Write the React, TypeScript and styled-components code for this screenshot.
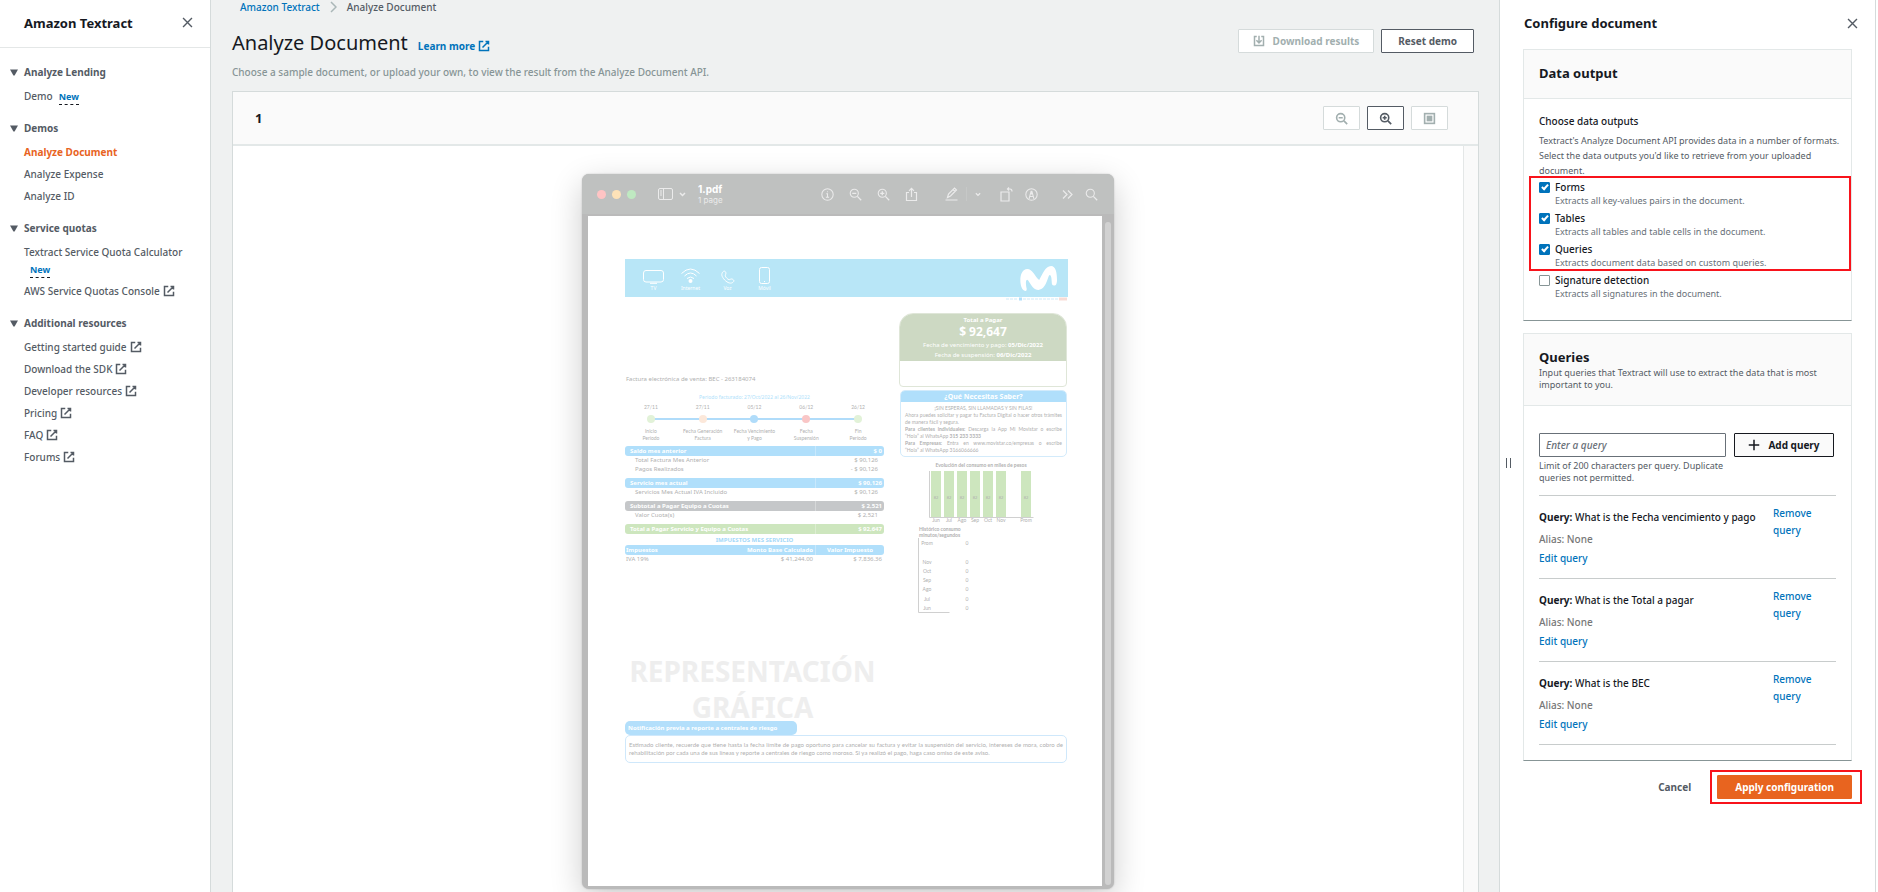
import React from "react";
import styled, { createGlobalStyle, css } from "styled-components";

const font = `"Noto Sans", "Open Sans", sans-serif`;
const c = {
  ink: "#16191f",
  text: "#545b64",
  muted: "#687078",
  soft: "#879596",
  disabled: "#a2afaf",
  line: "#d5dbdb",
  rule: "#e3e8e8",
  head: "#fafafa",
  link: "#0073bb",
  orange: "#e8641f",
  red: "#f8131b",
};

const GlobalStyle = createGlobalStyle`
  *, *::before, *::after { box-sizing: border-box; }
  body { margin: 0; background: #fff; font: 500 10px/16px ${font}; color: ${c.text}; }
  h1, h2, h3, p, ul { margin: 0; padding: 0; }
  ul { list-style: none; }
  button { font: inherit; color: inherit; background: none; border: 0; padding: 0; cursor: pointer; }
  a { text-decoration: none; color: inherit; }
  svg { display: block; flex: none; }
`;

/* ---------- shell ---------- */

const Shell = styled.div`
  display: grid;
  grid-template-columns: 211px minmax(0, 1fr) 377px;
  min-height: 100vh;
  padding-right: 2px;
`;

const Sidebar = styled.nav`
  border-right: 1px solid ${c.line};
`;

const SidebarHead = styled.div`
  display: flex;
  align-items: center;
  justify-content: space-between;
  height: 48px;
  padding: 0 16px 2px 24px;
  border-bottom: 1px solid #e4e7e7;
`;

const PanelTitle = styled.h2`
  font-size: 13px;
  line-height: 20px;
  font-weight: 700;
  color: ${c.ink};
`;

const IconButton = styled.button`
  display: flex;
  color: ${c.text};
`;

const Sections = styled.div`
  display: flex;
  flex-direction: column;
  gap: 10px;
  padding: 13px 10px 0;
`;

const SectionToggle = styled.button`
  display: flex;
  align-items: center;
  gap: 6px;
  height: 22px;
  margin-bottom: 2px;
  font-weight: 700;
`;

const SectionItem = styled.li`
  min-height: 22px;
  padding-left: 14px;
  white-space: nowrap;
`;

const NavLink = styled.a<{ $active?: boolean }>`
  display: inline-flex;
  align-items: center;
  gap: 3px;
  line-height: 22px;
  ${(p) =>
    p.$active &&
    css`
      font-weight: 700;
      color: ${c.orange};
    `}
`;

const Badge = styled.button<{ $below?: boolean }>`
  margin-left: 6px;
  font-size: 9px;
  line-height: 14px;
  font-weight: 700;
  color: ${c.link};
  border-bottom: 1px dashed ${c.ink};
  ${(p) =>
    p.$below &&
    css`
      display: block;
      margin-bottom: 2px;
    `}
`;

/* ---------- main ---------- */

const Main = styled.main`
  display: flex;
  flex-direction: column;
  padding: 0 20px 0 21px;
  background: #eff1f1;
`;

const Breadcrumbs = styled.nav`
  display: flex;
  align-items: center;
  gap: 10px;
  padding-left: 8px;
  height: 14px;
  color: ${c.text};
`;

const TextLink = styled.a`
  color: ${c.link};
`;

const TitleRow = styled.div`
  display: flex;
  justify-content: space-between;
  height: 50px;
  padding: 15px 5px 0 0;
`;

const TitleGroup = styled.div`
  display: flex;
  align-items: baseline;
  gap: 10px;
  height: 28px;
`;

const Title = styled.h1`
  font-size: 20px;
  line-height: 28px;
  font-weight: 400;
  color: ${c.ink};
`;

const LearnMore = styled.a`
  display: inline-flex;
  align-items: center;
  gap: 3px;
  font-weight: 700;
  color: ${c.link};
`;

const Actions = styled.div`
  display: flex;
  gap: 7px;
`;

type Tone = "normal" | "disabled" | "strong" | "primary" | "plain";
const tones: Record<Tone, string> = {
  normal: `background:#fff; color:${c.text}; border-color:${c.text};`,
  disabled: `background:#fff; color:${c.disabled}; border-color:${c.line};`,
  strong: `background:${c.head}; color:${c.ink}; border-color:${c.ink};`,
  primary: `background:${c.orange}; color:#fff; border-color:${c.orange};`,
  plain: `color:${c.text}; border-color:transparent;`,
};

const Button = styled.button<{ $tone: Tone; $pad?: number }>`
  display: inline-flex;
  align-items: center;
  justify-content: center;
  gap: 8px;
  height: 24px;
  padding: 0 ${(p) => p.$pad ?? 16}px;
  border: 1px solid;
  border-radius: 1px;
  font-weight: 700;
  white-space: nowrap;
  ${(p) => tones[p.$tone]}
`;

const Description = styled.p`
  height: 27px;
  color: ${c.soft};
`;

const Viewer = styled.section`
  display: flex;
  flex-direction: column;
  flex: 1;
  border: 1px solid ${c.line};
  border-bottom: 0;
  background: #fff;
`;

const ViewerHead = styled.header`
  display: flex;
  align-items: center;
  justify-content: space-between;
  height: 54px;
  padding: 0 30px 0 22px;
  background: ${c.head};
  border-bottom: 2px solid ${c.rule};
`;

const ViewerBody = styled.div`
  display: grid;
  grid-template-columns: minmax(0, 1fr) 15px;
  flex: 1;
`;

const Stage = styled.div`
  display: flex;
  justify-content: center;
  padding: 28px 0 3px;
  overflow: hidden;
`;

const Gutter = styled.div`
  background: ${c.head};
  border-left: 1px solid #e4e7e7;
`;

/* ---------- scanned window ---------- */

const DocWindow = styled.article`
  display: flex;
  flex-direction: column;
  width: 532px;
  height: 715px;
  border-radius: 7px;
  background: #bababa;
  box-shadow: 0 10px 32px rgba(0, 0, 0, 0.2), 0 0 2px rgba(0, 0, 0, 0.2);
  overflow: hidden;
`;

const TitleBar = styled.div`
  display: flex;
  align-items: center;
  height: 40px;
  padding: 0 16px 0 15px;
  background: #bfc1c0;
  color: #ebebeb;
`;

const Lights = styled.div`
  display: flex;
  gap: 6px;
  margin-right: 22px;
`;

const Light = styled.i<{ $color: string }>`
  width: 9px;
  height: 9px;
  border-radius: 50%;
  background: ${(p) => p.$color};
`;

const FileName = styled.div`
  margin: 0 auto 0 12px;
  font: 400 8px/10px Inter, sans-serif;
  strong {
    display: block;
    font-size: 10px;
    line-height: 12px;
    color: #fff;
  }
`;

const Tools = styled.div<{ $gap: number; $before?: number }>`
  display: flex;
  align-items: center;
  gap: ${(p) => p.$gap}px;
  margin-left: ${(p) => p.$before ?? 0}px;
`;

const Separator = styled.i`
  width: 1px;
  height: 14px;
  background: #c6c8c7;
`;

const PageRow = styled.div`
  display: grid;
  grid-template-columns: minmax(0, 1fr) 6px;
  gap: 3px;
  flex: 1;
  padding: 2px 3px 3px 6px;
`;

const Thumb = styled.div`
  margin: 6px 0 1px;
  border-radius: 3px;
  background: #d1d1d1;
`;

const Page = styled.div`
  padding: 43px 34px 0 37px;
  background: #fff;
  font-size: 6px;
  line-height: 9px;
  font-weight: 400;
  color: #b0b0b0;
`;

const Banner = styled.div`
  display: flex;
  align-items: center;
  justify-content: space-between;
  height: 38px;
  padding: 0 11px 0 10px;
  background: #b8e6f7;
  color: #fff;
`;

const Services = styled.div`
  display: flex;
`;

const Service = styled.div`
  display: flex;
  flex-direction: column;
  align-items: center;
  justify-content: flex-end;
  width: 37px;
  height: 28px;
  font-size: 5px;
  line-height: 7px;
  gap: 1px;
`;

const Columns = styled.div`
  display: grid;
  grid-template-columns: 259px 168px;
  gap: 15px;
  margin-top: 12px;
`;

const InvoiceNo = styled.p`
  padding: 61px 0 9px 1px;
  line-height: 10px;
`;

const Period = styled.p`
  text-align: center;
  font-size: 5px;
  line-height: 8px;
  color: #b0dffb;
`;

const Timeline = styled.ol`
  display: grid;
  grid-template-columns: repeat(5, 1fr);
  margin: 3px 0 0;
  padding: 0;
  list-style: none;
  text-align: center;
  font: 5px/7px Lato, sans-serif;
`;

const Step = styled.li`
  white-space: nowrap;
`;

const StepDot = styled.div<{ $color: string; $edge?: "first" | "last" }>`
  display: flex;
  justify-content: center;
  margin: 4px 0 5px;
  background: linear-gradient(#b0dcfa, #b0dcfa) no-repeat
    ${(p) => (p.$edge === "first" ? "right" : "left")} center /
    ${(p) => (p.$edge ? "50%" : "100%")} 2px;
  &::after {
    content: "";
    width: 8px;
    height: 8px;
    border-radius: 50%;
    background: ${(p) => p.$color};
  }
`;

const Charges = styled.table<{ $color: string }>`
  width: 100%;
  margin-top: 4px;
  border-spacing: 0;
  table-layout: fixed;
  th,
  td {
    padding: 0 6px 0 10px;
    font-weight: 400;
    text-align: left;
    line-height: 9px;
  }
  th:last-child,
  td:last-child {
    width: 69px;
    text-align: right;
  }
  thead th {
    padding: 0 2px 0 5px;
    font-weight: 700;
    line-height: 10px;
    color: #fff;
    background: ${(p) => p.$color};
  }
  thead th:first-child {
    border-radius: 3px 0 0 3px;
  }
  thead th:last-child {
    border-radius: 0 3px 3px 0;
    border-left: 1px solid rgba(255, 255, 255, 0.3);
  }
`;

const Taxes = styled(Charges)`
  margin-top: 0;
  caption {
    padding-top: 2px;
    font-weight: 700;
    line-height: 9px;
    color: #a5d9f9;
  }
  th,
  td,
  thead th {
    padding: 0 2px 0 1px;
  }
  th:nth-child(2),
  td:nth-child(2) {
    text-align: right;
  }
  thead th:last-child {
    padding-right: 11px;
  }
`;

const TotalCard = styled.div`
  height: 74px;
  border: 1px solid #dfe6d8;
  border-radius: 14px 14px 4px 4px;
  overflow: hidden;
`;

const TotalHead = styled.div`
  padding: 2px 0 1px;
  background: #cdd9c3;
  color: #fff;
  text-align: center;
  line-height: 10px;
`;

const TotalLabel = styled.h3`
  font-size: 6px;
  line-height: 8px;
`;

const Amount = styled.p`
  font-size: 12px;
  line-height: 16px;
  font-weight: 700;
`;

const InfoCard = styled.div`
  height: 67px;
  margin: 3px 0 4px 1px;
  border: 1px solid #d3ebfb;
  border-radius: 5px;
  overflow: hidden;
`;

const InfoLine = styled.p<{ $align?: "center" | "justify" }>`
  padding: 0 4px;
  font: 5px/7px Lato, sans-serif;
  white-space: nowrap;
  text-align-last: ${(p) => p.$align ?? "left"};
`;

const InfoTitle = styled.h3`
  margin-bottom: 3px;
  font-size: 7px;
  line-height: 11px;
  text-align: center;
  color: #fff;
  background: #b0dffb;
`;

const Watermark = styled.p`
  width: 255px;
  margin-top: 40px;
  font-size: 28px;
  line-height: 36px;
  font-weight: 700;
  text-align: center;
  color: #eee;
`;

const Notice = styled.h3`
  width: 172px;
  margin-top: -4px;
  padding-left: 3px;
  border-radius: 5px;
  font-size: 6px;
  line-height: 14px;
  background: #b3dffb;
  color: #fff;
`;

const NoticeBody = styled.div`
  width: 442px;
  padding: 5px 3px;
  border: 1px solid #cfe8fb;
  border-radius: 5px;
  font: 6px/8px Lato, sans-serif;
  white-space: nowrap;
`;

const FullLine = styled.p`
  text-align-last: justify;
`;

/* ---------- configuration panel ---------- */

const Aside = styled.aside`
  display: grid;
  grid-template-columns: 23px minmax(0, 1fr);
  padding-right: 23px;
  border-left: 1px solid ${c.line};
  border-right: 1px solid ${c.line};
`;

const Resizer = styled.button`
  display: flex;
  align-items: center;
  gap: 3px;
  padding: 34px 0 0 6px;
  cursor: col-resize;
  &::before,
  &::after {
    content: "";
    width: 1px;
    height: 10px;
    background: ${c.text};
  }
`;

const AsideHead = styled.div`
  display: flex;
  align-items: center;
  justify-content: space-between;
  height: 49px;
  padding: 0 0 3px 1px;
  margin-right: -7px;
`;

const Card = styled.section`
  margin-bottom: 12px;
  border: 1px solid ${c.rule};
  border-bottom-color: ${c.soft};
`;

const CardHead = styled.header<{ $tall?: boolean }>`
  padding: ${(p) => (p.$tall ? "13px 15px 14px" : "13px 15px 15px")};
  border-bottom: 1px solid ${c.rule};
  background: ${c.head};
`;

const Small = styled.p<{ $line?: number }>`
  font-size: 9px;
  line-height: ${(p) => p.$line ?? 12}px;
  font-weight: 400;
`;

const OutputHint = styled(Small)`
  white-space: nowrap;
`;

const OutputBody = styled.div`
  padding: 14px 15px 16px;
`;

const GroupLabel = styled.p`
  margin-bottom: 4px;
  color: ${c.ink};
`;

const Marked = styled.div<{ $top?: number }>`
  position: relative;
  margin-top: ${(p) => p.$top ?? 0}px;
`;

const Mark = styled.span<{ $inset: string }>`
  position: absolute;
  inset: ${(p) => p.$inset};
  border: 2px solid ${c.red};
  pointer-events: none;
`;

const Option = styled.label`
  display: grid;
  grid-template-columns: 11px 1fr;
  align-content: start;
  column-gap: 5px;
  height: 31px;
  line-height: 15px;
  color: ${c.ink};
  small {
    grid-column: 2;
    font-size: 9px;
    line-height: 12px;
    font-weight: 400;
    color: ${c.muted};
  }
`;

const Check = styled.input`
  appearance: none;
  display: flex;
  justify-content: center;
  width: 11px;
  height: 11px;
  margin: 2px 0 0;
  border: 1px solid ${c.soft};
  border-radius: 1px;
  &:checked {
    border-color: ${c.link};
    background: ${c.link};
  }
  &:checked::after {
    content: "";
    width: 4px;
    height: 7px;
    border: solid #fff;
    border-width: 0 2px 2px 0;
    transform: rotate(42deg);
  }
`;

const QueryBody = styled.div`
  padding: 27px 15px 15px;
`;

const QueryForm = styled.form`
  display: grid;
  grid-template-columns: minmax(0, 1fr) 100px;
  column-gap: 8px;
  row-gap: 3px;
  margin: 0 2px 11px 0;
`;

const QueryInput = styled.input`
  width: 100%;
  height: 24px;
  padding: 0 6px;
  border: 1px solid ${c.muted};
  border-radius: 1px;
  font: 500 10px/16px ${font};
  &::placeholder {
    font-style: italic;
    color: ${c.muted};
    opacity: 1;
  }
`;

const QueryList = styled.ul`
  border-top: 1px solid #c8cccc;
`;

const QueryItem = styled.li`
  display: grid;
  grid-template-columns: minmax(0, 1fr) 63px;
  height: 83px;
  padding-top: 9px;
  border-bottom: 1px solid #c8cccc;
  color: ${c.ink};
`;

const QueryText = styled.p`
  padding-top: 3px;
  white-space: nowrap;
  line-height: 18px;
`;

const Alias = styled.p`
  padding: 4px 0 2px;
  line-height: 18px;
  color: #777;
`;

const LinkButton = styled.button`
  align-self: start;
  line-height: 17px;
  text-align: left;
  color: ${c.link};
`;

const Footer = styled.footer`
  display: flex;
  justify-content: flex-end;
  gap: 9px;
  padding-top: 2px;
`;

/* ---------- icons ---------- */

type IconProps = { size?: number; w?: number; vb?: string; sw?: number; children: React.ReactNode };
const Icon = ({ size = 12, w, vb = "0 0 16 16", sw = 2, children }: IconProps) => (
  <svg width={w ?? size} height={size} viewBox={vb} fill="none" stroke="currentColor" strokeWidth={sw} aria-hidden>
    {children}
  </svg>
);
const External = () => (
  <Icon>
    <path d="M10 2h4v4M6 10l8-8M14 9v5H2V2h5" />
  </Icon>
);
const Close = () => (
  <Icon size={13}>
    <path d="M2.500 2.500l11 11M13.500 2.500l-11 11" strokeWidth="1.700" />
  </Icon>
);
const Caret = () => (
  <svg width="8" height="7" viewBox="0 0 8 7" fill="currentColor" aria-hidden>
    <path d="M0 0.500h8L4.600 6.500H3.400z" />
  </svg>
);
const Lens = ({ plus }: { plus?: boolean }) => (
  <Icon size={13}>
    <circle cx="7" cy="7" r="5" />
    <path d={plus ? "M11 11l4 4M4.500 7h5M7 4.500v5" : "M11 11l4 4M4.500 7h5"} />
  </Icon>
);
const BarLens = ({ sign }: { sign?: string }) => (
  <Icon size={13} sw={1.3}>
    <circle cx="6.500" cy="6.500" r="5" />
    <path d={"M10.300 10.300L15 15" + (sign ?? "")} strokeWidth="1.600" />
  </Icon>
);

/* ---------- data ---------- */

type Item = { label: string; active?: boolean; ext?: boolean; badge?: "side" | "below" };
const sections: { title: string; items: Item[] }[] = [
  { title: "Analyze Lending", items: [{ label: "Demo", badge: "side" }] },
  {
    title: "Demos",
    items: [{ label: "Analyze Document", active: true }, { label: "Analyze Expense" }, { label: "Analyze ID" }],
  },
  {
    title: "Service quotas",
    items: [
      { label: "Textract Service Quota Calculator", badge: "below" },
      { label: "AWS Service Quotas Console", ext: true },
    ],
  },
  {
    title: "Additional resources",
    items: ["Getting started guide", "Download the SDK", "Developer resources", "Pricing", "FAQ", "Forums"].map(
      (label) => ({ label, ext: true }),
    ),
  },
];

const outputs = [
  ["Forms", "Extracts all key-values pairs in the document."],
  ["Tables", "Extracts all tables and table cells in the document."],
  ["Queries", "Extracts document data based on custom queries."],
];

const queries = ["What is the Fecha vencimiento y pago", "What is the Total a pagar", "What is the BEC"];

const steps = [
  { date: "27/11", color: "#e2f2d8", label: ["Inicio", "Período"] },
  { date: "27/11", color: "#fce8da", label: ["Fecha Generación", "Factura"] },
  { date: "05/12", color: "#b0dcfa", label: ["Fecha Vencimiento", "y Pago"] },
  { date: "06/12", color: "#f9c6c6", label: ["Fecha", "Suspensión"] },
  { date: "26/12", color: "#e2f2d8", label: ["Fin", "Período"] },
];

const charges = [
  {
    color: "#b0dffb",
    head: ["Saldo mes anterior", "$ 0"],
    rows: [
      ["Total Factura Mes Anterior", "$ 90,126"],
      ["Pagos  Realizados", "- $ 90,126"],
    ],
  },
  { color: "#b0dffb", head: ["Servicio mes actual", "$ 90,126"], rows: [["Servicios Mes Actual IVA Incluido", "$ 90,126"]] },
  { color: "#c5c7c9", head: ["Subtotal a Pagar Equipo a Cuotas", "$ 2,521"], rows: [["Valor Cuota(s)", "$ 2,521"]] },
  { color: "#cde6be", head: ["Total a Pagar Servicio y Equipo a Cuotas", "$ 92,647"], rows: [] },
];

const bars: [string, number][] = [
  ["Jun", 2], ["Jul", 15], ["Ago", 28], ["Sep", 41], ["Oct", 54], ["Nov", 67], ["Prom", 92],
];
const history: [string, number][] = [
  ["Prom", 6], ["Nov", 25], ["Oct", 34], ["Sep", 43], ["Ago", 52], ["Jul", 62], ["Jun", 71],
];

/* ---------- parts ---------- */

const OptionRow = ({ name, hint, on }: { name: string; hint: string; on?: boolean }) => (
  <Option>
    <Check type="checkbox" defaultChecked={on} />
    {name}
    <small>{hint}</small>
  </Option>
);

const UsageCharts = () => (
  <svg width="168" height="152" fontFamily="Lato, sans-serif" fontSize="5" fill="#b0b0b0" textAnchor="middle">
    <text x="82" y="6" fontWeight="700">
      Evolución del consumo en miles de pesos
    </text>
    {bars.map(([m, x]) => (
      <g key={m}>
        <rect x={x + 30} y="10" width="10" height="46" fill="#cde6be" />
        <text x={x + 35} y="38" fontSize="4">82</text>
        <text x={x + 35} y="61">{m}</text>
      </g>
    ))}
    <path d="M30.500 10v46.500h104" fill="none" stroke="#d0d0d0" />
    <text x="20" y="70" textAnchor="start" fontWeight="700">Histórico consumo</text>
    <text x="20" y="76" textAnchor="start" fontWeight="700">minutos/segundos</text>
    <path d="M19.500 77v74.500h31" fill="none" stroke="#d0d0d0" />
    {history.map(([m, y]) => (
      <g key={m}>
        <text x="28" y={y + 78}>{m}</text>
        <text x="68" y={y + 78}>0</text>
      </g>
    ))}
  </svg>
);

const ScannedInvoice = () => (
  <DocWindow>
    <TitleBar>
      <Lights>
        <Light $color="#ffc4c4" />
        <Light $color="#fee2b8" />
        <Light $color="#bfe9c1" />
      </Lights>
      <Icon w={15} size={12} vb="0 0 15 12" sw={1}>
        <rect x="0.500" y="0.500" width="14" height="11" rx="1.500" />
        <path d="M5.500 0.500v11M2 3h2M2 5h2M2 7h2" />
      </Icon>
      <Tools $gap={0} $before={6}>
        <Icon w={7} size={5} vb="0 0 7 5" sw={1.5}>
          <path d="M1 1l2.500 2.500L6 1" />
        </Icon>
      </Tools>
      <FileName>
        <strong>1.pdf</strong>1 page
      </FileName>
      <Tools $gap={15}>
        <Icon size={13} sw={1.3}>
          <circle cx="8" cy="8" r="7" />
          <path d="M6.500 7H8v4.500M6 11.500h4M7.500 4.500h1" />
        </Icon>
        <BarLens sign="M4 6.500h5" />
        <BarLens sign="M4 6.500h5M6.500 4v5" />
        <Icon size={15} w={13} vb="0 0 13 15" sw={1.2}>
          <path d="M4 5.500H1.500v8h10v-8H9M6.500 10V1.500M4 3.800l2.500-2.500L9 3.800" />
        </Icon>
      </Tools>
      <Tools $gap={8} $before={27}>
        <Icon size={14} w={13} vb="0 0 13 14" sw={1.2}>
          <path d="M0.500 13h12M2.500 10.500l1-3.500 6-6 2 2-6 6zM8 2.500l2 2" />
        </Icon>
        <Separator />
        <Icon w={6} size={5} vb="0 0 7 5" sw={1.5}>
          <path d="M1 1l2.500 2.500L6 1" />
        </Icon>
      </Tools>
      <Tools $gap={12} $before={19}>
        <Icon size={15} w={13} vb="0 0 13 15" sw={1.2}>
          <path d="M1 5h8v9H1zM7.500 2h2.500q2 0 2 2.500M9 0.500L7.500 2 9 3.500" />
        </Icon>
        <Icon size={13} sw={1.3}>
          <circle cx="8" cy="8" r="7" />
          <path d="M5 13.500L7.500 4h1L11 13.500M6 10.500h4M8 4v4" />
        </Icon>
      </Tools>
      <Tools $gap={12} $before={24}>
        <Icon size={9} w={11} vb="0 0 11 9" sw={1.2}>
          <path d="M1 0.500l4 4-4 4M6 0.500l4 4-4 4" />
        </Icon>
        <BarLens />
      </Tools>
    </TitleBar>
    <PageRow>
      <Page>
        <Banner>
          <Services>
            <Service>
              <Icon w={21} size={14} vb="0 0 21 14" sw={1}>
                <rect x="0.500" y="0.500" width="20" height="11.500" rx="2.500" />
                <path d="M7 13.300h7" />
              </Icon>
              TV
            </Service>
            <Service>
              <Icon w={19} size={16} vb="0 0 19 16" sw={1}>
                <path d="M0.500 5.500q9-9 18 0M3.500 8q6-6 12 0M6 10.500q3.500-3 7 0" />
                <circle cx="9.500" cy="13" r="2" fill="currentColor" stroke="none" />
              </Icon>
              Internet
            </Service>
            <Service>
              <Icon size={14} sw={1.1}>
                <path d="M1.500 3C3 0.500 5 1 5.500 3s-1 2.500-0.500 4 2.500 3.500 4 4 2-1.500 4-0.500 2.500 2.500 0 4S6 14 3 10 1 4.500 1.500 3z" />
              </Icon>
              Voz
            </Service>
            <Service>
              <Icon w={11} size={17} vb="0 0 11 17" sw={1}>
                <rect x="0.500" y="0.500" width="10" height="16" rx="2" />
                <path d="M5 14.500h1" />
              </Icon>
              Móvil
            </Service>
          </Services>
          <svg width="37" height="26" viewBox="0 0 112 78" fill="#fff" role="img" aria-label="Movistar">
            <path d="M16 78C6 78 1 60 1 46C1 28 8 12 22 12C38 12 44 34 58 45C68 30 76 3 94 3C108 3 112 24 112 44C112 54 110 62 103 62C97 62 96 56 96 50C96 40 94 30 90 30C84 30 82 72 56 75C36 76 30 48 22 44C16 44 18 60 20 70C21 75 20 78 16 78Z" />
          </svg>
        </Banner>
        <Icon w={443} size={4} vb="0 0 443 4" sw={1}>
          <path d="M381 2h12M398 2h36" stroke="#cfeaf8" strokeDasharray="3 1" />
          <path d="M394 2h3" stroke="#b0dffb" strokeWidth="3" />
          <path d="M434 2h8" stroke="#f8dcd6" strokeWidth="3" />
        </Icon>
        <Columns>
          <div>
            <InvoiceNo>Factura electrónica de venta: BEC - 263184074</InvoiceNo>
            <Period>Periodo facturado: 27/Oct/2022 al 26/Nov/2022</Period>
            <Timeline>
              {steps.map((s, i) => (
                <Step key={i}>
                  {s.date}
                  <StepDot $color={s.color} $edge={i === 0 ? "first" : i === 4 ? "last" : undefined} />
                  {s.label[0]}
                  <br />
                  {s.label[1]}
                </Step>
              ))}
            </Timeline>
            {charges.map((t) => (
              <Charges key={t.head[0]} $color={t.color}>
                <thead>
                  <tr>
                    <th>{t.head[0]}</th>
                    <th>{t.head[1]}</th>
                  </tr>
                </thead>
                <tbody>
                  {t.rows.map((r) => (
                    <tr key={r[0]}>
                      <td>{r[0]}</td>
                      <td>{r[1]}</td>
                    </tr>
                  ))}
                </tbody>
              </Charges>
            ))}
            <Taxes $color="#b0dffb">
              <caption>IMPUESTOS MES SERVICIO</caption>
              <thead>
                <tr>
                  <th>Impuestos</th>
                  <th>Monto Base Calculado</th>
                  <th>Valor Impuesto</th>
                </tr>
              </thead>
              <tbody>
                <tr>
                  <td>IVA 19%</td>
                  <td>$ 41,244.00</td>
                  <td>$ 7,836.36</td>
                </tr>
              </tbody>
            </Taxes>
          </div>
          <div>
            <TotalCard>
              <TotalHead>
                <TotalLabel>Total a Pagar</TotalLabel>
                <Amount>$ 92,647</Amount>
                <p>
                  Fecha de vencimiento y pago: <b>05/Dic/2022</b>
                </p>
                <p>
                  Fecha de suspensión: <b>06/Dic/2022</b>
                </p>
              </TotalHead>
            </TotalCard>
            <InfoCard>
              <InfoTitle>¿Qué Necesitas Saber?</InfoTitle>
              <InfoLine $align="center">¡SIN ESPERAS, SIN LLAMADAS Y SIN FILAS!</InfoLine>
              <InfoLine $align="justify">Ahora puedes solicitar y pagar tu Factura Digital o hacer otros trámites</InfoLine>
              <InfoLine>de manera fácil y segura.</InfoLine>
              <InfoLine $align="justify">
                <b>Para clientes individuales:</b> Descarga la App Mi Movistar o escribe
              </InfoLine>
              <InfoLine>
                “Hola” al WhatsApp <b>315 233 3333</b>
              </InfoLine>
              <InfoLine $align="justify">
                <b>Para Empresas:</b> Entra en www.movistar.co/empresas o escribe
              </InfoLine>
              <InfoLine>“Hola” al WhatsApp 3166066666</InfoLine>
            </InfoCard>
            <UsageCharts />
          </div>
        </Columns>
        <Watermark>
          REPRESENTACIÓN
          <br />
          GRÁFICA
        </Watermark>
        <Notice>Notificación previa a reporte a centrales de riesgo</Notice>
        <NoticeBody>
          <FullLine>
            Estimado cliente, recuerde que tiene hasta la fecha límite de pago oportuno para cancelar su factura y evitar
            la suspensión del servicio, intereses de mora, cobro de
          </FullLine>
          <p>
            rehabilitación por cada una de sus líneas y reporte a centrales de riesgo como moroso. Si ya realizó el pago,
            haga caso omiso de este aviso.
          </p>
        </NoticeBody>
      </Page>
      <Thumb />
    </PageRow>
  </DocWindow>
);

export default function App() {
  return (
    <>
      <GlobalStyle />
      <Shell>
        <Sidebar aria-label="Amazon Textract">
          <SidebarHead>
            <PanelTitle>Amazon Textract</PanelTitle>
            <IconButton aria-label="Close navigation">
              <Close />
            </IconButton>
          </SidebarHead>
          <Sections>
            {sections.map((s) => (
              <div key={s.title}>
                <SectionToggle aria-expanded>
                  <Caret />
                  {s.title}
                </SectionToggle>
                <ul>
                  {s.items.map((i) => (
                    <SectionItem key={i.label}>
                      <NavLink href="#" $active={i.active}>
                        {i.label}
                        {i.ext && <External />}
                      </NavLink>
                      {i.badge && <Badge $below={i.badge === "below"}>New</Badge>}
                    </SectionItem>
                  ))}
                </ul>
              </div>
            ))}
          </Sections>
        </Sidebar>

        <Main>
          <Breadcrumbs aria-label="Breadcrumbs">
            <TextLink href="#">Amazon Textract</TextLink>
            <Icon w={7} size={12} vb="0 0 7 12" sw={1.5}>
              <path d="M1 1l5 5-5 5" stroke="#aab7b8" />
            </Icon>
            <span>Analyze Document</span>
          </Breadcrumbs>
          <TitleRow>
            <TitleGroup>
              <Title>Analyze Document</Title>
              <LearnMore href="#">
                Learn more
                <External />
              </LearnMore>
            </TitleGroup>
            <Actions>
              <Button $tone="disabled" $pad={14} disabled>
                <Icon>
                  <path d="M5 2H2v12h12V2h-3M8 1v9M4.500 7L8 10.500 11.500 7" />
                </Icon>
                Download results
              </Button>
              <Button $tone="normal">Reset demo</Button>
            </Actions>
          </TitleRow>
          <Description>
            Choose a sample document, or upload your own, to view the result from the Analyze Document API.
          </Description>
          <Viewer>
            <ViewerHead>
              <PanelTitle>1</PanelTitle>
              <Actions>
                <Button $tone="disabled" $pad={11} disabled aria-label="Zoom out">
                  <Lens />
                </Button>
                <Button $tone="normal" $pad={11} aria-label="Zoom in">
                  <Lens plus />
                </Button>
                <Button $tone="disabled" $pad={11} disabled aria-label="Fit to view">
                  <Icon size={13}>
                    <rect x="2" y="2" width="12" height="12" />
                    <rect x="4.500" y="4.500" width="7" height="7" fill="currentColor" stroke="none" />
                  </Icon>
                </Button>
              </Actions>
            </ViewerHead>
            <ViewerBody>
              <Stage>
                <ScannedInvoice />
              </Stage>
              <Gutter />
            </ViewerBody>
          </Viewer>
        </Main>

        <Aside>
          <Resizer aria-label="Resize panel" />
          <div>
            <AsideHead>
              <PanelTitle>Configure document</PanelTitle>
              <IconButton aria-label="Close panel">
                <Close />
              </IconButton>
            </AsideHead>
            <Card>
              <CardHead>
                <PanelTitle>Data output</PanelTitle>
              </CardHead>
              <OutputBody role="group" aria-labelledby="outputs-label">
                <GroupLabel id="outputs-label">Choose data outputs</GroupLabel>
                <OutputHint $line={15}>
                  Textract's Analyze Document API provides data in a number of formats.
                  <br />
                  Select the data outputs you'd like to retrieve from your uploaded
                  <br />
                  document.
                </OutputHint>
                <Marked $top={2}>
                  {outputs.map(([name, hint]) => (
                    <OptionRow key={name} name={name} hint={hint} on />
                  ))}
                  <Mark $inset="-4px -15px 2px -10px" />
                </Marked>
                <OptionRow name="Signature detection" hint="Extracts all signatures in the document." />
              </OutputBody>
            </Card>
            <Card>
              <CardHead $tall>
                <PanelTitle>Queries</PanelTitle>
                <Small>Input queries that Textract will use to extract the data that is most important to you.</Small>
              </CardHead>
              <QueryBody>
                <QueryForm onSubmit={(e) => e.preventDefault()}>
                  <QueryInput placeholder="Enter a query" aria-label="Enter a query" />
                  <Button $tone="strong" $pad={4}>
                    <Icon>
                      <path d="M8 1v14M1 8h14" />
                    </Icon>
                    Add query
                  </Button>
                  <Small>Limit of 200 characters per query. Duplicate queries not permitted.</Small>
                </QueryForm>
                <QueryList>
                  {queries.map((q) => (
                    <QueryItem key={q}>
                      <div>
                        <QueryText>
                          <b>Query:</b> {q}
                        </QueryText>
                        <Alias>Alias: None</Alias>
                        <LinkButton>Edit query</LinkButton>
                      </div>
                      <LinkButton>
                        Remove
                        <br />
                        query
                      </LinkButton>
                    </QueryItem>
                  ))}
                </QueryList>
              </QueryBody>
            </Card>
            <Footer>
              <Button $tone="plain">Cancel</Button>
              <Marked>
                <Button $tone="primary" $pad={17}>Apply configuration</Button>
                <Mark $inset="-5px -10px -5px -7px" />
              </Marked>
            </Footer>
          </div>
        </Aside>
      </Shell>
    </>
  );
}
